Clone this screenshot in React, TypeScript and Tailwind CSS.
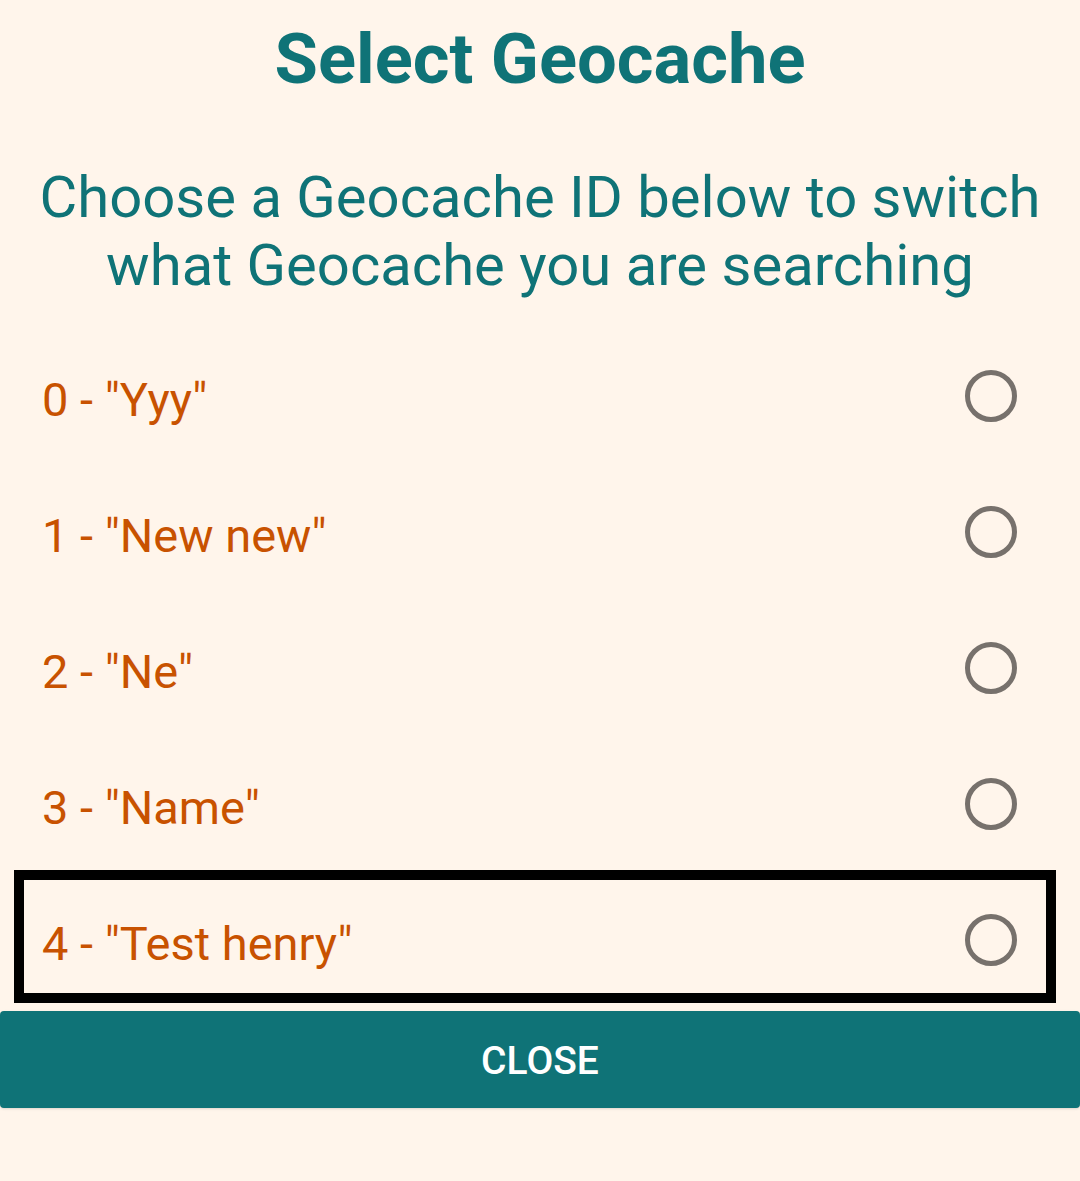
import React from "react";

const items = ['0 - "Yyy"', '1 - "New new"', '2 - "Ne"', '3 - "Name"', '4 - "Test henry"'];

export default function App() {
  return (
    <div
      className="w-[1080px] h-[1181px] bg-[#FFF5EB] flex flex-col"
      style={{ fontFamily: "Roboto, 'Noto Sans', sans-serif" }}
    >
      <h1 className="pt-[18px] text-center text-[70.5px] leading-[82px] font-bold text-[#0F7377]">
        Select Geocache
      </h1>
      <p className="mt-[63px] px-[30px] text-center text-[58px] leading-[68px] text-[#0F7377]">
        Choose a Geocache ID below to switch what Geocache you are searching
      </p>
      <div className="mt-[32px] flex flex-col">
        {items.map((t, i) => (
          <div key={i} className="relative h-[136px] flex items-center justify-between pl-[42px] pr-[63px]">
            {i === 4 && (
              <div className="absolute top-[-5px] bottom-[8px] left-[14px] right-[24px] border-[10px] border-black" />
            )}
            <span className="text-[47px] leading-none text-[#C85200]">{t}</span>
            <span className="w-[52px] h-[52px] rounded-full border-[5px] border-[#77716C] -translate-y-[3px]" />
          </div>
        ))}
      </div>
      <button className="h-[97px] w-full bg-[#0F7377] rounded-[4px] shadow-sm text-white text-[39px] font-medium flex items-center justify-center pt-[4px]">
        CLOSE
      </button>
    </div>
  );
}
